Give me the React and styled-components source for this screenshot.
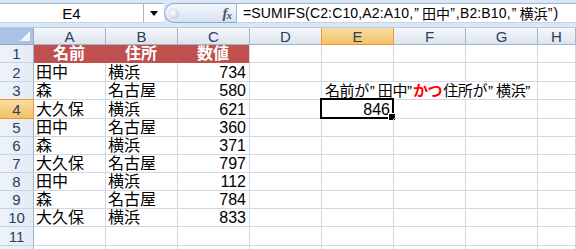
import React from "react";
import styled, { createGlobalStyle, css } from "styled-components";

const GlobalStyle = createGlobalStyle`
  body {
    margin: 0;
    background: #ffffff;
  }
  * {
    box-sizing: border-box;
  }
`;

const Window = styled.div`
  width: 576px;
  height: 249px;
  overflow: hidden;
  display: flex;
  flex-direction: column;
  font-family: "Liberation Sans", "Noto Sans CJK JP", sans-serif;
  background: #ffffff;
`;

const FormulaBar = styled.div`
  height: 28px;
  display: flex;
  padding: 3px 0 4px;
  background: #dbe7f3;
  border-bottom: 1px solid #b8c9de;
`;

const NameBox = styled.div`
  width: 144px;
  background: #ffffff;
  border-top: 1px solid #9fb5cf;
  border-bottom: 1px solid #c5d3e4;
  border-right: 1px solid #b3b3b3;
  display: flex;
  align-items: center;
  justify-content: center;
  font-size: 15px;
  color: #000;
`;

const DropButton = styled.div`
  width: 20px;
  background: #ffffff;
  border-top: 1px solid #9fb5cf;
  border-bottom: 1px solid #c5d3e4;
  display: flex;
  align-items: center;
  justify-content: center;
  &::after {
    content: "";
    border-left: 4px solid transparent;
    border-right: 4px solid transparent;
    border-top: 5px solid #000;
    margin-top: 1px;
  }
`;

const FxPill = styled.div`
  width: 73px;
  position: relative;
  background: linear-gradient(#f4f8fd, #d4e2f3);
  border: 1px solid #8ea8cb;
  border-right: 1px solid #9fb5cf;
  border-radius: 11px 0 0 11px;
  display: flex;
  align-items: center;
  justify-content: flex-end;
  padding-right: 5px;
  &::before {
    content: "";
    position: absolute;
    left: 4px;
    top: 5px;
    width: 10px;
    height: 10px;
    border-radius: 50%;
    background: radial-gradient(circle at 40% 40%, #ffffff, #c3d0df 75%);
    box-shadow: 0 0 0 1px #e3eaf3;
  }
`;

const FxLabel = styled.span`
  font-family: "Liberation Serif", serif;
  font-style: italic;
  font-weight: bold;
  font-size: 15px;
  color: #555;
  letter-spacing: -1px;
  & sub {
    font-size: 11px;
    vertical-align: -1px;
  }
`;

const FormulaInput = styled.div`
  flex: 1;
  background: #ffffff;
  border-top: 1px solid #9fb5cf;
  border-bottom: 1px solid #c5d3e4;
  display: flex;
  align-items: center;
  padding-left: 6px;
  font-size: 14px;
  letter-spacing: 0.15px;
  white-space: nowrap;
  overflow: hidden;
`;

const Quote = styled.span`
  font-family: "Liberation Sans", sans-serif;
  margin: ${(p) => (p.$open ? "0 3px 0 1px" : "0 1px 0 0")};
  letter-spacing: 0;
`;

const Sheet = styled.div`
  display: grid;
  grid-template-columns: 34px repeat(7, 72px) 1fr;
  grid-template-rows: 17px 18px 19px 18px 19px 18px 18px 18px 18px 18px 18px 19px 20px;
`;

const headerBase = css`
  display: flex;
  align-items: center;
  justify-content: center;
  color: #27415f;
  font-size: 15px;
`;

const Corner = styled.div`
  background: #a9c3e6;
  border-right: 1px solid #8fa9c9;
  border-bottom: 1px solid #8fa9c9;
  position: relative;
  &::after {
    content: "";
    position: absolute;
    right: 3px;
    bottom: 3px;
    border-left: 10px solid transparent;
    border-bottom: 10px solid #ffffff;
    opacity: 0.85;
  }
`;

const ColHeader = styled.div`
  ${headerBase}
  background: ${(p) =>
    p.$active
      ? "linear-gradient(#f9dca3, #f2c266)"
      : "linear-gradient(#f6f8fb, #dce4ee)"};
  border-right: 1px solid ${(p) => (p.$active ? "#f29436" : "#9eb6ce")};
  border-left: ${(p) => (p.$active ? "1px solid #f29436" : "none")};
  border-bottom: 1px solid ${(p) => (p.$active ? "#f29436" : "#9eb6ce")};
  margin-left: ${(p) => (p.$active ? "-1px" : "0")};
`;

const RowHeader = styled.div`
  ${headerBase}
  background: ${(p) =>
    p.$active
      ? "linear-gradient(#f9dca3, #f2c266)"
      : "linear-gradient(to right, #eef3fa, #e3ebf5)"};
  border-right: 1px solid ${(p) => (p.$active ? "#f29436" : "#9eb6ce")};
  border-bottom: 1px solid ${(p) => (p.$active ? "#f29436" : "#c5d3e4")};
  border-top: ${(p) => (p.$active ? "1px solid #f29436" : "none")};
  margin-top: ${(p) => (p.$active ? "-1px" : "0")};
`;

const Cell = styled.div`
  position: relative;
  border-right: 1px solid ${(p) => (p.$fill && !p.$last ? p.$fill : "#d0d7e5")};
  border-bottom: 1px solid ${(p) => (p.$fill ? p.$fill : "#d0d7e5")};
  background: ${(p) => p.$fill || "transparent"};
  color: ${(p) => (p.$fill ? "#ffffff" : "#000000")};
  font-weight: ${(p) => (p.$bold ? "bold" : "normal")};
  font-size: 16px;
  line-height: 17px;
  display: flex;
  align-items: center;
  justify-content: ${(p) =>
    p.$align === "right" ? "flex-end" : p.$align === "center" ? "center" : "flex-start"};
  padding: 0 3px 0 2px;
  white-space: nowrap;
  grid-column: ${(p) => (p.$span ? `span ${p.$span}` : "auto")};
`;

const Note = styled(Cell)`
  font-size: 15px;
  letter-spacing: -0.4px;
  padding-left: 3px;
`;

const Accent = styled.span`
  color: #ff0000;
  font-weight: bold;
  margin-right: 1px;
`;

const Selection = styled.div`
  position: absolute;
  left: -2px;
  top: -2px;
  right: -1px;
  bottom: -1px;
  border: 2px solid #000;
  pointer-events: none;
  &::after {
    content: "";
    position: absolute;
    right: -4px;
    bottom: -4px;
    width: 6px;
    height: 6px;
    background: #000;
    border: 1px solid #fff;
  }
`;

const columns = ["A", "B", "C", "D", "E", "F", "G", "H"];

const data = [
  ["田中", "横浜", 734],
  ["森", "名古屋", 580],
  ["大久保", "横浜", 621],
  ["田中", "名古屋", 360],
  ["森", "横浜", 371],
  ["大久保", "名古屋", 797],
  ["田中", "横浜", 112],
  ["森", "名古屋", 784],
  ["大久保", "横浜", 833],
];

const RED = "#c0504d";

const Quoted = ({ children }) => (
  <>
    <Quote $open>”</Quote>
    {children}
    <Quote>”</Quote>
  </>
);

function renderRow(rowNum) {
  const cells = [
    <RowHeader key="h" $active={rowNum === 4}>
      {rowNum <= 11 ? rowNum : ""}
    </RowHeader>,
  ];

  if (rowNum === 1) {
    ["名前", "住所", "数値"].forEach((t, i) =>
      cells.push(
        <Cell key={t} $fill={RED} $bold $align="center" $last={i === 2}>
          {t}
        </Cell>
      )
    );
    for (let i = 3; i < 8; i++) cells.push(<Cell key={i} />);
    return cells;
  }

  const rec = data[rowNum - 2];
  if (rec) {
    cells.push(<Cell key="a">{rec[0]}</Cell>);
    cells.push(<Cell key="b">{rec[1]}</Cell>);
    cells.push(
      <Cell key="c" $align="right">
        {rec[2]}
      </Cell>
    );
  } else {
    cells.push(<Cell key="a" />, <Cell key="b" />, <Cell key="c" />);
  }
  cells.push(<Cell key="d" />);

  if (rowNum === 3) {
    cells.push(
      <Note key="e" $span={3}>
        名前が<Quoted>田中</Quoted>
        <Accent>かつ</Accent>住所が<Quoted>横浜</Quoted>
      </Note>
    );
    cells.push(<Cell key="h2" />);
    return cells;
  }

  if (rowNum === 4) {
    cells.push(
      <Cell key="e" $align="right">
        846
        <Selection />
      </Cell>
    );
  } else {
    cells.push(<Cell key="e" />);
  }
  cells.push(<Cell key="f" />, <Cell key="g" />, <Cell key="h2" />);
  return cells;
}

export default function App() {
  return (
    <Window>
      <GlobalStyle />
      <FormulaBar>
        <NameBox>E4</NameBox>
        <DropButton />
        <FxPill>
          <FxLabel>
            f<sub>x</sub>
          </FxLabel>
        </FxPill>
        <FormulaInput>
          =SUMIFS(C2:C10,A2:A10,<Quoted>田中</Quoted>,B2:B10,
          <Quoted>横浜</Quoted>)
        </FormulaInput>
      </FormulaBar>
      <Sheet>
        <Corner />
        {columns.map((c) => (
          <ColHeader key={c} $active={c === "E"}>
            {c}
          </ColHeader>
        ))}
        {Array.from({ length: 12 }, (_, i) => renderRow(i + 1))}
      </Sheet>
    </Window>
  );
}
